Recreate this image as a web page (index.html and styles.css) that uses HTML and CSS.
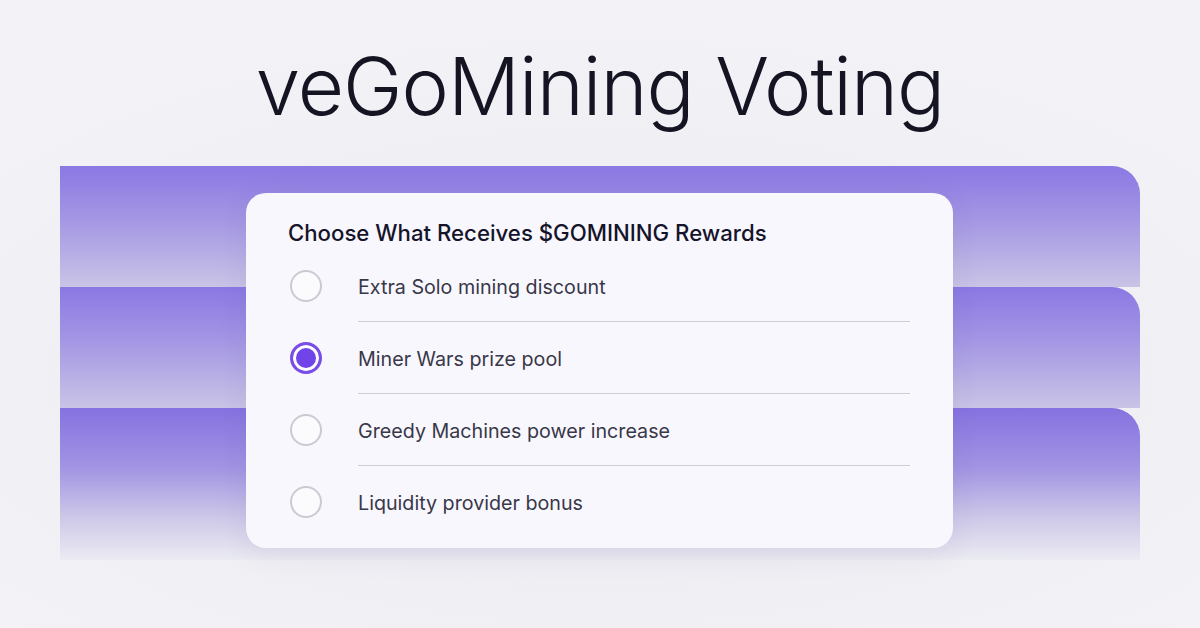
FILE: index.html
```html
<!DOCTYPE html>
<html lang="en">
<head>
    <meta charset="UTF-8">
    <meta name="viewport" content="width=device-width, initial-scale=1.0">
    <title>veGoMining Voting</title>
    <link rel="stylesheet" href="styles.css">
</head>
<body>
    <header>
        <h1 class="title">veGoMining Voting</h1>
    </header>
    <main class="stage">
        <div class="bands">
            <div class="band"></div>
            <div class="band"></div>
            <div class="band band-last"></div>
        </div>
        <section class="card">
            <h2 class="card-title">Choose What Receives $GOMINING Rewards</h2>
            <ul class="options">
                <li class="option">
                    <span class="radio"></span>
                    <span class="label">Extra Solo mining discount</span>
                </li>
                <li class="option">
                    <span class="radio checked"></span>
                    <span class="label">Miner Wars prize pool</span>
                </li>
                <li class="option">
                    <span class="radio"></span>
                    <span class="label">Greedy Machines power increase</span>
                </li>
                <li class="option">
                    <span class="radio"></span>
                    <span class="label no-line">Liquidity provider bonus</span>
                </li>
            </ul>
        </section>
    </main>
</body>
</html>
```

FILE: styles.css
```css
body {
    margin: 0;
    height: 628px;
    overflow: hidden;
    font-family: Inter, "Noto Sans", sans-serif;
    background: radial-gradient(ellipse 70% 60% at 50% 60%, #e6e6ed 0%, #efeff4 60%, #f3f3f7 100%);
}

.title {
    margin: 0;
    padding-top: 46px;
    height: 80px;
    margin-bottom: 40px;
    font-size: 80px;
    line-height: 80px;
    font-weight: 300;
    letter-spacing: -1px;
    text-align: center;
    color: #141422;
}

.stage {
    display: grid;
    margin: 0 60px;
}

.bands,
.card {
    grid-area: 1 / 1;
}

.band {
    height: 121px;
    border-top-right-radius: 28px;
    background: linear-gradient(180deg, #8b78e3 0%, #a597e4 45%, #c9c4e6 100%);
}

.band-last {
    height: 152px;
    border-top-right-radius: 28px;
    background: linear-gradient(180deg, #8672e0 0%, #a395e3 40%, #cdc8e8 72%, #ebebf2 100%);
}

.card {
    align-self: start;
    justify-self: start;
    margin: 27px 0 0 186px;
    width: 707px;
    height: 355px;
    box-sizing: border-box;
    padding: 0 43px 0 42px;
    background: #f8f7fd;
    border-radius: 20px;
    box-shadow: 0 6px 30px rgba(60, 50, 120, 0.08);
}

.card-title {
    margin: 0;
    padding-top: 23px;
    height: 34px;
    font-size: 22.2px;
    line-height: 34px;
    font-weight: 500;
    color: #15142a;
}

.options {
    list-style: none;
    margin: 0;
    padding: 0;
}

.option {
    display: flex;
    align-items: center;
    height: 72px;
}

.radio {
    flex: none;
    width: 32px;
    height: 32px;
    box-sizing: border-box;
    margin-left: 2px;
    margin-right: 36px;
    border: 2px solid #cbcad4;
    border-radius: 50%;
    background: #fbfbfe;
}

.radio.checked {
    border: 3px solid #7a4ce8;
    background: #7044e8;
    box-shadow: inset 0 0 0 3px #ffffff;
}

.label {
    flex: 1;
    align-self: stretch;
    display: flex;
    align-items: center;
    padding-top: 2px;
    border-bottom: 1px solid #cfced8;
    font-size: 19.7px;
    color: #383849;
}

.label.no-line {
    border-bottom: none;
}
```
